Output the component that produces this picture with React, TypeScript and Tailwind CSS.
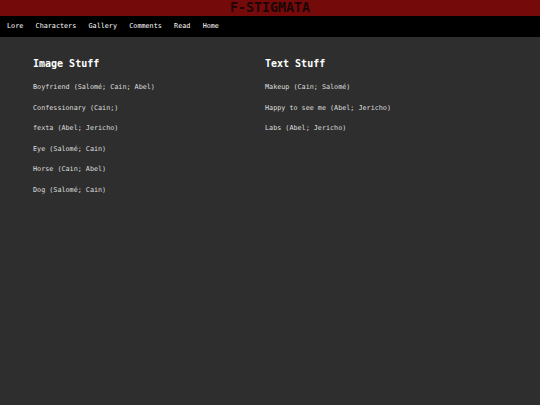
const imageStuff = [
  "Boyfriend (Salomé; Cain; Abel)",
  "Confessionary (Cain;)",
  "fexta (Abel; Jericho)",
  "Eye (Salomé; Cain)",
  "Horse (Cain; Abel)",
  "Dog (Salomé; Cain)",
];

const textStuff = [
  "Makeup (Cain; Salomé)",
  "Happy to see me (Abel; Jericho)",
  "Labs (Abel; Jericho)",
];

const navLinks = ["Lore", "Characters", "Gallery", "Comments", "Read", "Home"];

const Column = ({ title, items }: { title: string; items: string[] }) => (
  <div className="w-[232px]">
    <h2 className="text-[10px] font-bold leading-[12px] text-white">{title}</h2>
    <ul className="mt-[7px]">
      {items.map((item) => (
        <li key={item} className="text-[6.75px] leading-[20.6px] text-[#dedede]">
          {item}
        </li>
      ))}
    </ul>
  </div>
);

export default function App() {
  return (
    <div className="min-h-[405px] w-full bg-[#2e2e2e] font-['DejaVu_Sans_Mono',monospace]">
      <header className="flex h-[16px] items-center justify-center bg-[#740a0a]">
        <h1 className="text-[13.33px] font-bold leading-none text-[#1c0505]">F-STIGMATA</h1>
      </header>
      <nav className="flex h-[21px] items-center gap-[12.3px] bg-black pl-[7px]">
        {navLinks.map((link) => (
          <a key={link} className="text-[6.75px] text-white">
            {link}
          </a>
        ))}
      </nav>
      <main className="flex pl-[33px] pt-[21px]">
        <Column title="Image Stuff" items={imageStuff} />
        <Column title="Text Stuff" items={textStuff} />
      </main>
    </div>
  );
}
